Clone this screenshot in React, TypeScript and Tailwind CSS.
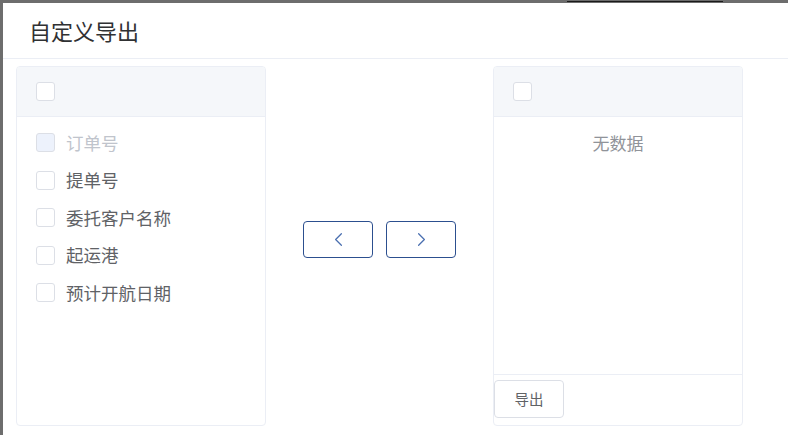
import { ChevronLeft, ChevronRight } from "lucide-react";

const Box = ({ disabled = false }: { disabled?: boolean }) => (
  <span
    className={`w-[19px] h-[19px] rounded-[3px] border shrink-0 ${
      disabled ? "bg-[#edf2fc] border-[#dcdfe6]" : "bg-white border-[#dcdfe6]"
    }`}
  ></span>
);

const App = () => {
  const fields = [
    { id: 1, label: "订单号", disabled: true },
    { id: 2, label: "提单号", disabled: false },
    { id: 3, label: "委托客户名称", disabled: false },
    { id: 4, label: "起运港", disabled: false },
    { id: 5, label: "预计开航日期", disabled: false },
  ];

  return (
    <div
      className="w-[788px] h-[435px] overflow-hidden bg-[#6d6d6d] pl-[3px] pt-[3px] relative"
      style={{ fontFamily: '"Noto Sans CJK SC", "Noto Sans", sans-serif' }}
    >
      <div className="absolute left-[567px] top-[1px] w-[156px] h-[1px] bg-[#1a1a1a]"></div>

      <div className="bg-white w-[900px] h-[600px]">
        {/* header */}
        <div className="h-[56px] border-b border-[#ebeef5] flex items-center pl-[26px]">
          <h2 className="text-[22px] text-[#303133]">自定义导出</h2>
        </div>

        {/* body */}
        <div className="flex pl-[13px] pt-[7px]">
          {/* source panel */}
          <div className="w-[250px] h-[360px] border border-[#ebeef5] rounded-[4px] overflow-hidden flex flex-col">
            <div className="h-[50px] bg-[#f5f7fa] border-b border-[#ebeef5] flex items-center pl-[19px] shrink-0">
              <Box />
            </div>
            <div className="pt-[7px]">
              {fields.map((item) => (
                <div
                  key={item.id}
                  className="h-[37.5px] flex items-center pl-[19px] gap-[11px]"
                >
                  <Box disabled={item.disabled} />
                  <span
                    className={`text-[17.5px] ${
                      item.disabled ? "text-[#c0c4cc]" : "text-[#606266]"
                    }`}
                  >
                    {item.label}
                  </span>
                </div>
              ))}
            </div>
          </div>

          {/* transfer buttons */}
          <div className="flex items-center gap-[13px] mx-[37px] pb-[14px]">
            <button className="w-[70px] h-[37px] rounded-[4px] border border-[#2c4f8f] flex items-center justify-center text-[#4a6fb0]">
              <ChevronLeft size={23} strokeWidth={1.3} />
            </button>
            <button className="w-[70px] h-[37px] rounded-[4px] border border-[#2c4f8f] flex items-center justify-center text-[#4a6fb0]">
              <ChevronRight size={23} strokeWidth={1.3} />
            </button>
          </div>

          {/* target panel */}
          <div className="w-[250px] h-[360px] border border-[#ebeef5] rounded-[4px] overflow-hidden flex flex-col">
            <div className="h-[50px] bg-[#f5f7fa] border-b border-[#ebeef5] flex items-center pl-[19px] shrink-0">
              <Box />
            </div>
            <div className="flex-1 pt-[13px] text-center">
              <p className="text-[17px] text-[#909399]">无数据</p>
            </div>
            <div className="h-[51px] border-t border-[#ebeef5] pt-[5px] shrink-0">
              <button className="w-[70px] h-[38px] rounded-[4px] border border-[#dcdfe6] bg-white text-[14.5px] text-[#606266]">
                导出
              </button>
            </div>
          </div>
        </div>
      </div>
    </div>
  );
};

export default App;
